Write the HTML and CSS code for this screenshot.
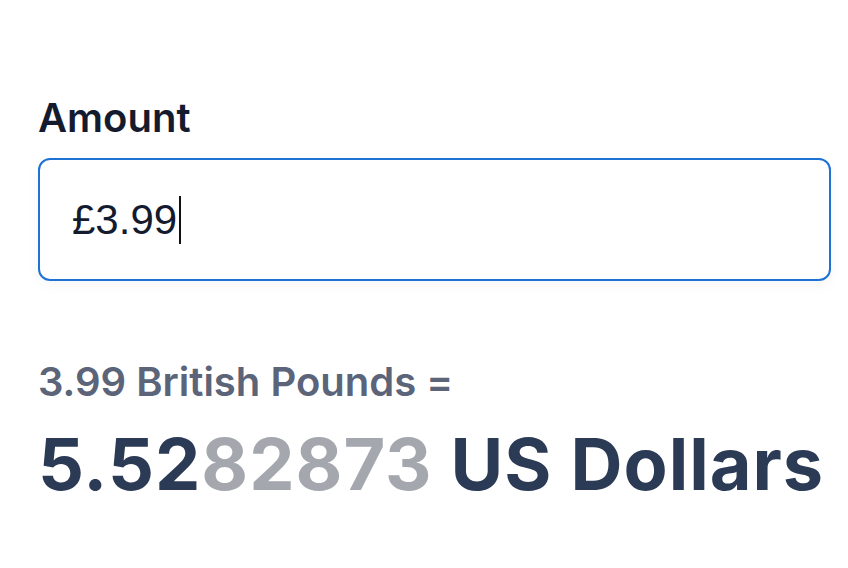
FILE: index.html
```html
<!DOCTYPE html>
<html>
<head>
<meta charset="utf-8">
<link rel="stylesheet" href="styles.css">
</head>
<body>
<main class="converter">
  <label class="label" for="amount">Amount</label>
  <div class="field">
    <span class="value">£3.99</span><span class="caret"></span>
  </div>
  <div class="result">
    <p class="from">3.99 British Pounds =</p>
    <p class="to"><span class="strong">5.52</span><span class="faint">82873</span> US Dollars</p>
  </div>
</main>
</body>
</html>
```
FILE: styles.css
```css
html, body {
  margin: 0;
  padding: 0;
  background: #ffffff;
}
body {
  font-family: Inter, "Noto Sans", sans-serif;
}
.converter {
  padding: 94px 17px 0 38px;
  display: flex;
  flex-direction: column;
}
.label {
  font-size: 40px;
  font-weight: 600;
  color: #141b2e;
  line-height: 48px;
  margin-bottom: 16px;
}
.field {
  height: 119px;
  border: 2px solid #1e72d4;
  border-radius: 12px;
  display: flex;
  align-items: center;
  padding-left: 32px;
  box-shadow: 0 4px 14px rgba(0,0,0,0.04);
}
.value {
  font-family: "Liberation Sans", Arial, sans-serif;
  font-size: 42px;
  color: #141b2e;
}
.caret {
  width: 2px;
  height: 48px;
  background: #111;
  margin-left: 2px;
}
.result {
  margin-top: 77px;
}
.from {
  margin: 0;
  font-size: 40px;
  font-weight: 600;
  color: #5b6478;
  line-height: 48px;
}
.to {
  margin: 15px 0 0;
  font-size: 72px;
  font-weight: 700;
  color: #2b3a55;
  line-height: 86px;
  letter-spacing: 1px;
  white-space: nowrap;
}
.faint {
  color: #a4a7ae;
}
```
